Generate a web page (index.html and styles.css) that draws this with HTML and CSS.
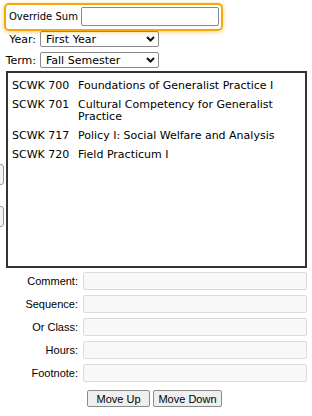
FILE: index.html
```html
<!DOCTYPE html>
<html lang="en">
<head>
    <meta charset="UTF-8">
    <meta name="viewport" content="width=device-width, initial-scale=1.0">
    <title>Course Sequence</title>
    <link rel="stylesheet" href="styles.css">
</head>
<body>
    <div class="page">
        <div class="override">
            <label class="override-label">Override Sum</label>
            <input class="override-input" type="text">
        </div>
        <div class="field">
            <label class="field-label">Year:</label>
            <div class="select"><span>First Year</span><svg width="9" height="6" viewBox="0 0 9 6"><path d="M1 1 L4.5 4.5 L8 1" fill="none" stroke="#111" stroke-width="2"/></svg></div>
        </div>
        <div class="field">
            <label class="field-label">Term:</label>
            <div class="select"><span>Fall Semester</span><svg width="9" height="6" viewBox="0 0 9 6"><path d="M1 1 L4.5 4.5 L8 1" fill="none" stroke="#111" stroke-width="2"/></svg></div>
        </div>
        <div class="list-wrap">
            <span class="edge-btn edge-one"></span>
            <span class="edge-btn edge-two"></span>
            <div class="listbox">
                <div class="item"><span class="code">SCWK 700</span><span class="title">Foundations of Generalist Practice I</span></div>
                <div class="item"><span class="code">SCWK 701</span><span class="title">Cultural Competency for Generalist Practice</span></div>
                <div class="item"><span class="code">SCWK 717</span><span class="title">Policy I: Social Welfare and Analysis</span></div>
                <div class="item"><span class="code">SCWK 720</span><span class="title">Field Practicum I</span></div>
            </div>
        </div>
        <div class="details">
            <label>Comment:</label><input type="text">
            <label>Sequence:</label><input type="text">
            <label>Or Class:</label><input type="text">
            <label>Hours:</label><input type="text">
            <label>Footnote:</label><input type="text">
        </div>
        <div class="actions">
            <button class="btn btn-up">Move Up</button>
            <button class="btn btn-down">Move Down</button>
        </div>
    </div>
</body>
</html>
```

FILE: styles.css
```css
body {
    margin: 0;
    background-color: #fff;
    font-family: "DejaVu Sans", Verdana, sans-serif;
    font-size: 11px;
    color: #000;
}
.page {
    width: 312px;
    height: 416px;
    overflow: hidden;
    position: relative;
}
.override {
    display: flex;
    align-items: center;
    width: 210px;
    height: 22px;
    margin: 3px 0 0 4px;
    padding: 0 2px 2px 3px;
    border: 2px solid #f5a80c;
    border-radius: 5px;
    box-shadow: 0 1px 4px rgba(245, 168, 12, 0.6);
}
.override-label {
    margin-right: 3px;
    font-size: 10px;
    white-space: nowrap;
}
.override-input {
    flex: 1;
    min-width: 0;
    width: 0;
    height: 19px;
    box-sizing: border-box;
    margin: 0;
    border: 1px solid #8a8a8a;
    border-radius: 2px;
    padding: 0;
}
.field {
    display: flex;
    align-items: center;
}
.field + .field {
    margin-top: 5px;
}
.field-label {
    width: 36px;
    text-align: right;
    margin-right: 4px;
}
.select {
    display: flex;
    align-items: center;
    justify-content: space-between;
    box-sizing: border-box;
    width: 119px;
    height: 16px;
    padding: 0 3px 0 5px;
    border: 1px solid #8a8a8a;
    border-radius: 2px;
}
.list-wrap {
    position: relative;
    margin-top: 3px;
}
.edge-btn {
    position: absolute;
    left: -8px;
    width: 10px;
    height: 19px;
    border: 1px solid #999;
    border-radius: 3px;
    background-color: #f4f4f4;
}
.edge-one {
    top: 93px;
}
.edge-two {
    top: 135px;
}
.listbox {
    box-sizing: border-box;
    width: 301px;
    height: 197px;
    margin-left: 6px;
    padding: 4px 4px;
    border: 2px solid #333;
}
.item {
    display: flex;
    padding: 3px 0;
    line-height: 12px;
}
.item + .item {
    margin-top: 1px;
}
.code {
    width: 66px;
    flex: none;
}
.details {
    display: grid;
    grid-template-columns: 78px 224px;
    column-gap: 5px;
    row-gap: 5px;
    margin-top: 4px;
    font-family: "Liberation Sans", Arial, sans-serif;
    font-size: 11px;
}
.details label {
    text-align: right;
    line-height: 18px;
}
.details input {
    height: 18px;
    box-sizing: border-box;
    margin: 0;
    border: 1px solid #dcdcdc;
    border-radius: 2px;
    background-color: #f8f8f8;
}
.actions {
    display: flex;
    gap: 3px;
    margin: 8px 0 0 87px;
}
.btn {
    height: 17px;
    padding: 0;
    font-family: "Liberation Sans", Arial, sans-serif;
    font-size: 11px;
    border: 1px solid #8a8a8a;
    border-radius: 2px;
    background-color: #efefef;
    color: #000;
}
.btn-up {
    width: 63px;
}
.btn-down {
    width: 69px;
}
```
